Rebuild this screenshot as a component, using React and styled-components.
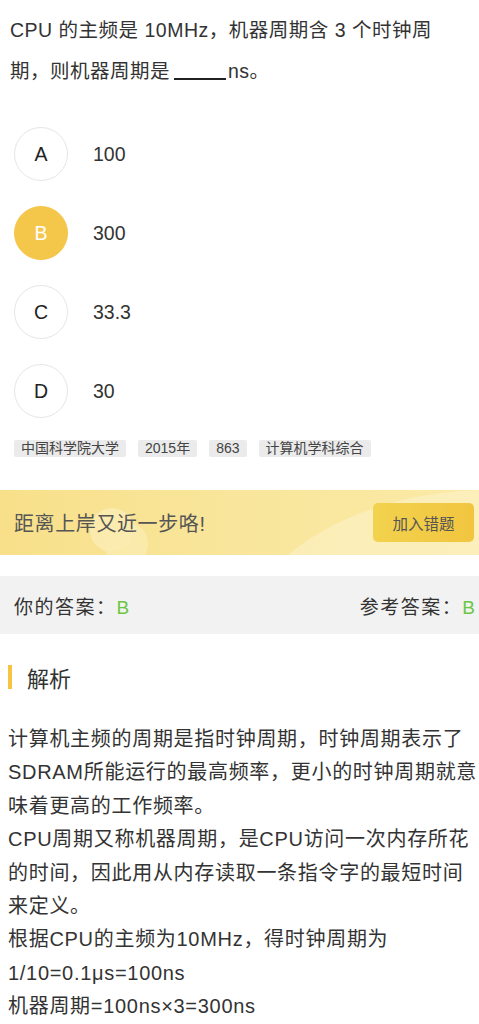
import React from "react";
import styled, { createGlobalStyle } from "styled-components";

const GlobalStyle = createGlobalStyle`
  body {
    margin: 0;
    background: #fff;
    font-family: "Liberation Sans", "Noto Sans CJK SC", sans-serif;
    color: #333;
  }
`;

const Page = styled.div`
  width: 479px;
  overflow: hidden;
`;

const Question = styled.div`
  padding: 10px 17px 0 10px;
  font-size: 19.5px;
  letter-spacing: 0.5px;
  line-height: 41px;
  color: #333;
`;

const Blank = styled.span`
  display: inline-block;
  width: 52px;
  height: 2px;
  background: #222;
  vertical-align: -2px;
  margin: 0 2px 0 4px;
`;

const OptionList = styled.div`
  margin-top: 35px;
  padding-left: 14px;
  display: flex;
  flex-direction: column;
  gap: 25px;
`;

const OptionRow = styled.div`
  display: flex;
  align-items: center;
  gap: 25px;
  height: 54px;
`;

const Circle = styled.div`
  width: 54px;
  height: 54px;
  box-sizing: border-box;
  border-radius: 50%;
  display: flex;
  align-items: center;
  justify-content: center;
  font-size: 19.5px;
  border: 1px solid ${(p) => (p.selected ? "#f4c64a" : "#e6e6e6")};
  background: ${(p) => (p.selected ? "#f4c64a" : "#fff")};
  color: ${(p) => (p.selected ? "#fff" : "#222")};
`;

const OptionText = styled.span`
  font-size: 19.5px;
  color: #333;
`;

const Tags = styled.div`
  display: flex;
  gap: 12px;
  margin-top: 22px;
  padding-left: 14px;
`;

const Tag = styled.span`
  font-size: 14px;
  line-height: 17px;
  padding: 0 7px;
  background: #ebebeb;
  border-radius: 2px;
  color: #444;
`;

const Banner = styled.div`
  position: relative;
  margin-top: 33px;
  height: 65px;
  display: flex;
  align-items: center;
  justify-content: space-between;
  padding: 0 5px 0 14px;
  overflow: hidden;
  background: linear-gradient(90deg, #f8e08a 0%, #f9e69c 50%, #fbeaa6 100%);

  &::before {
    content: "";
    position: absolute;
    left: 228px;
    top: 0;
    width: 520px;
    height: 360px;
    border-radius: 50%;
    background: rgba(255, 250, 225, 0.35);
  }

  &::after {
    content: "";
    position: absolute;
    left: 90px;
    top: 18px;
    width: 44px;
    height: 44px;
    border-radius: 50%;
    background: rgba(255, 255, 240, 0.3);
    box-shadow: 14px 14px 0 rgba(255, 255, 240, 0.25);
  }
`;

const BannerText = styled.span`
  position: relative;
  z-index: 1;
  font-size: 20px;
  letter-spacing: 0.6px;
  color: #555;
`;

const AddButton = styled.button`
  position: relative;
  z-index: 1;
  width: 101px;
  height: 39px;
  border: none;
  border-radius: 5px;
  background: linear-gradient(90deg, #f2d24e, #f2c53f);
  font-family: inherit;
  font-size: 15.5px;
  color: #555;
`;

const AnswerBar = styled.div`
  margin-top: 21px;
  height: 58px;
  background: #f2f2f2;
  display: flex;
  align-items: center;
  justify-content: space-between;
  padding: 0 4px 0 14px;
  font-size: 19px;
  letter-spacing: 1.5px;
  color: #333;
`;

const Green = styled.span`
  color: #6cc644;
  letter-spacing: 0;
`;

const SectionTitle = styled.div`
  margin-top: 31px;
  display: flex;
  align-items: center;
  gap: 15px;
  padding-left: 8px;
  height: 24px;
  font-size: 22px;
  color: #333;

  &::before {
    content: "";
    width: 4px;
    height: 24px;
    background: #f6c343;
  }
`;

const Analysis = styled.div`
  margin-top: 34px;
  padding-left: 8px;
  font-size: 20px;
  letter-spacing: 0.7px;
  line-height: 33.4px;
  color: #333;
`;

const options = [
  { key: "A", text: "100" },
  { key: "B", text: "300", selected: true },
  { key: "C", text: "33.3" },
  { key: "D", text: "30" },
];

const tags = ["中国科学院大学", "2015年", "863", "计算机学科综合"];

export default function App() {
  return (
    <Page>
      <GlobalStyle />
      <Question>
        CPU 的主频是 10MHz，机器周期含 3 个时钟周期，则机器周期是
        <Blank />
        ns。
      </Question>
      <OptionList>
        {options.map((o) => (
          <OptionRow key={o.key}>
            <Circle selected={o.selected}>{o.key}</Circle>
            <OptionText>{o.text}</OptionText>
          </OptionRow>
        ))}
      </OptionList>
      <Tags>
        {tags.map((t) => (
          <Tag key={t}>{t}</Tag>
        ))}
      </Tags>
      <Banner>
        <BannerText>距离上岸又近一步咯!</BannerText>
        <AddButton>加入错题</AddButton>
      </Banner>
      <AnswerBar>
        <span>
          你的答案：<Green>B</Green>
        </span>
        <span>
          参考答案：<Green>B</Green>
        </span>
      </AnswerBar>
      <SectionTitle>解析</SectionTitle>
      <Analysis>
        计算机主频的周期是指时钟周期，时钟周期表示了SDRAM所能运行的最高频率，更小的时钟周期就意味着更高的工作频率。
        <br />
        CPU周期又称机器周期，是CPU访问一次内存所花的时间，因此用从内存读取一条指令字的最短时间来定义。
        <br />
        根据CPU的主频为10MHz，得时钟周期为1/10=0.1μs=100ns
        <br />
        机器周期=100ns×3=300ns
      </Analysis>
    </Page>
  );
}
